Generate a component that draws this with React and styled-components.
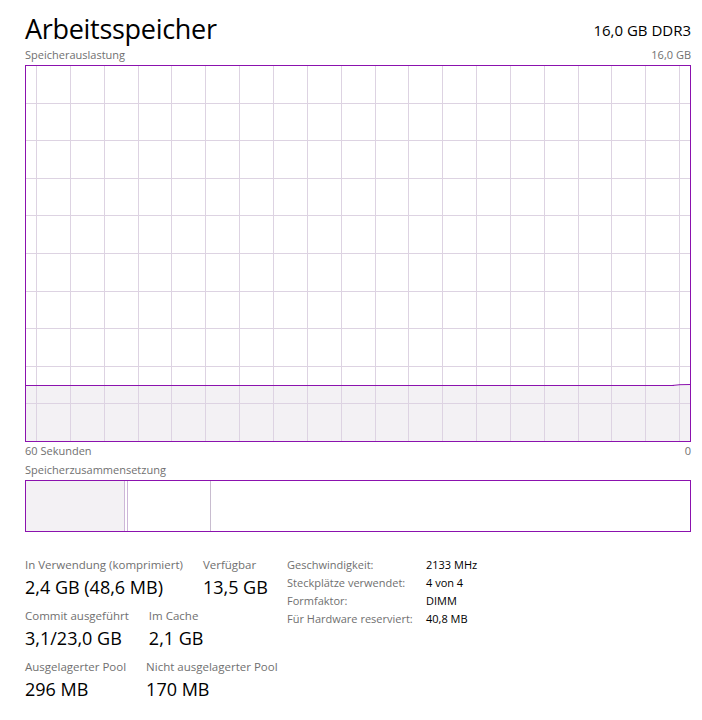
import React from "react";
import styled, { createGlobalStyle } from "styled-components";

const PURPLE = "#8b12ae";
const GRID = "#ddd3e2";
const FILL = "#f3f1f4";

const GlobalStyle = createGlobalStyle`
  body {
    margin: 0;
    background: #ffffff;
    font-family: "Open Sans", "Noto Sans", sans-serif;
    color: #000;
  }
`;

const Page = styled.div`
  width: 666px;
  padding: 0 11px 0 25px;
`;

const Header = styled.div`
  display: flex;
  justify-content: space-between;
  align-items: flex-end;
  height: 46px;
`;

const Title = styled.h1`
  margin: 0;
  font-weight: 400;
  font-size: 27px;
  line-height: 34px;
  letter-spacing: -0.3px;
`;

const Spec = styled.div`
  font-size: 15px;
  line-height: 20px;
  margin-bottom: 6px;
`;

const Caption = styled.div`
  display: flex;
  justify-content: space-between;
  font-size: 11px;
  line-height: 18px;
  color: #707070;
  height: ${({ $h }) => $h || 18}px;
`;

const GraphBox = styled.div`
  box-sizing: border-box;
  width: 666px;
  height: 377px;
  border: 1px solid ${PURPLE};
  svg {
    display: block;
  }
`;

const CompBar = styled.div`
  box-sizing: border-box;
  display: flex;
  width: 666px;
  height: 52px;
  border: 1px solid ${PURPLE};
  margin-top: 1px;
`;

const Segment = styled.div`
  width: ${({ $w }) => $w}px;
  background: ${({ $bg }) => $bg || "#fff"};
  border-left: ${({ $start }) => $start || "none"};
  border-right: ${({ $edge }) => $edge || "none"};
  flex: ${({ $grow }) => ($grow ? 1 : "none")};
`;

const Stats = styled.div`
  display: flex;
  margin-top: 24px;
`;

const LeftStats = styled.div`
  display: flex;
  flex-direction: column;
  gap: 6px;
  width: 262px;
`;

const StatRow = styled.div`
  display: flex;
  gap: 20px;
`;

const Stat = styled.div`
  display: flex;
  flex-direction: column;
`;

const Label = styled.div`
  font-size: 11.5px;
  line-height: 18px;
  color: #707070;
  white-space: nowrap;
`;

const Value = styled.div`
  font-size: 18px;
  line-height: 27px;
  white-space: nowrap;
`;

const Details = styled.div`
  display: grid;
  grid-template-columns: 139px auto;
  grid-auto-rows: 18px;
  font-size: 11px;
  line-height: 18px;
`;

const DKey = styled.div`
  color: #707070;
`;

const DVal = styled.div`
  color: #000;
`;

const W = 664;
const H = 375;
const USAGE_Y = 319;

function UsageGraph() {
  const vlines = [];
  for (let x = 10; x < W; x += 33.85) vlines.push(Math.round(x) + 0.5);
  const hlines = [];
  for (let i = 1; i < 10; i++) hlines.push(Math.round(i * 37.6) - 0.5);
  return (
    <GraphBox>
      <svg width={W} height={H}>
        <rect x="0" y={USAGE_Y} width={W} height={H - USAGE_Y} fill={FILL} />
        {vlines.map((x) => (
          <line key={x} x1={x} x2={x} y1="0" y2={H} stroke={GRID} strokeWidth="1" />
        ))}
        {hlines.map((y) => (
          <line key={y} x1="0" x2={W} y1={y} y2={y} stroke={GRID} strokeWidth="1" />
        ))}
        <rect x="0" y={USAGE_Y} width="648" height="1" fill={PURPLE} />
        <path
          d={`M646 ${USAGE_Y + 0.5} L654 ${USAGE_Y - 0.3} L${W} ${USAGE_Y - 0.5}`}
          fill="none"
          stroke={PURPLE}
          strokeWidth="1"
        />
      </svg>
    </GraphBox>
  );
}

const leftStats = [
  [
    ["In Verwendung (komprimiert)", "2,4 GB (48,6 MB)"],
    ["Verfügbar", "13,5 GB"],
  ],
  [
    ["Commit ausgeführt", "3,1/23,0 GB"],
    ["Im Cache", "2,1 GB"],
  ],
  [
    ["Ausgelagerter Pool", "296 MB"],
    ["Nicht ausgelagerter Pool", "170 MB"],
  ],
];

const details = [
  ["Geschwindigkeit:", "2133 MHz"],
  ["Steckplätze verwendet:", "4 von 4"],
  ["Formfaktor:", "DIMM"],
  ["Für Hardware reserviert:", "40,8 MB"],
];

export default function App() {
  return (
    <>
      <GlobalStyle />
      <Page>
        <Header>
          <Title>Arbeitsspeicher</Title>
          <Spec>16,0 GB DDR3</Spec>
        </Header>
        <Caption $h={19}>
          <span>Speicherauslastung</span>
          <span>16,0 GB</span>
        </Caption>
        <UsageGraph />
        <Caption $h={19}>
          <span>60 Sekunden</span>
          <span>0</span>
        </Caption>
        <Caption>
          <span>Speicherzusammensetzung</span>
        </Caption>
        <CompBar>
          <Segment $w={98} $bg={FILL} />
          <Segment $w={2} $start="1px solid #cdb6d8" $edge="1px solid #cdb6d8" />
          <Segment $w={82} $edge="1px solid #c8bccf" />
          <Segment $grow />
        </CompBar>
        <Stats>
          <LeftStats>
            {leftStats.map((row, i) => (
              <StatRow key={i}>
                {row.map(([label, value]) => (
                  <Stat key={label}>
                    <Label>{label}</Label>
                    <Value>{value}</Value>
                  </Stat>
                ))}
              </StatRow>
            ))}
          </LeftStats>
          <Details>
            {details.map(([k, v]) => (
              <React.Fragment key={k}>
                <DKey>{k}</DKey>
                <DVal>{v}</DVal>
              </React.Fragment>
            ))}
          </Details>
        </Stats>
      </Page>
    </>
  );
}
